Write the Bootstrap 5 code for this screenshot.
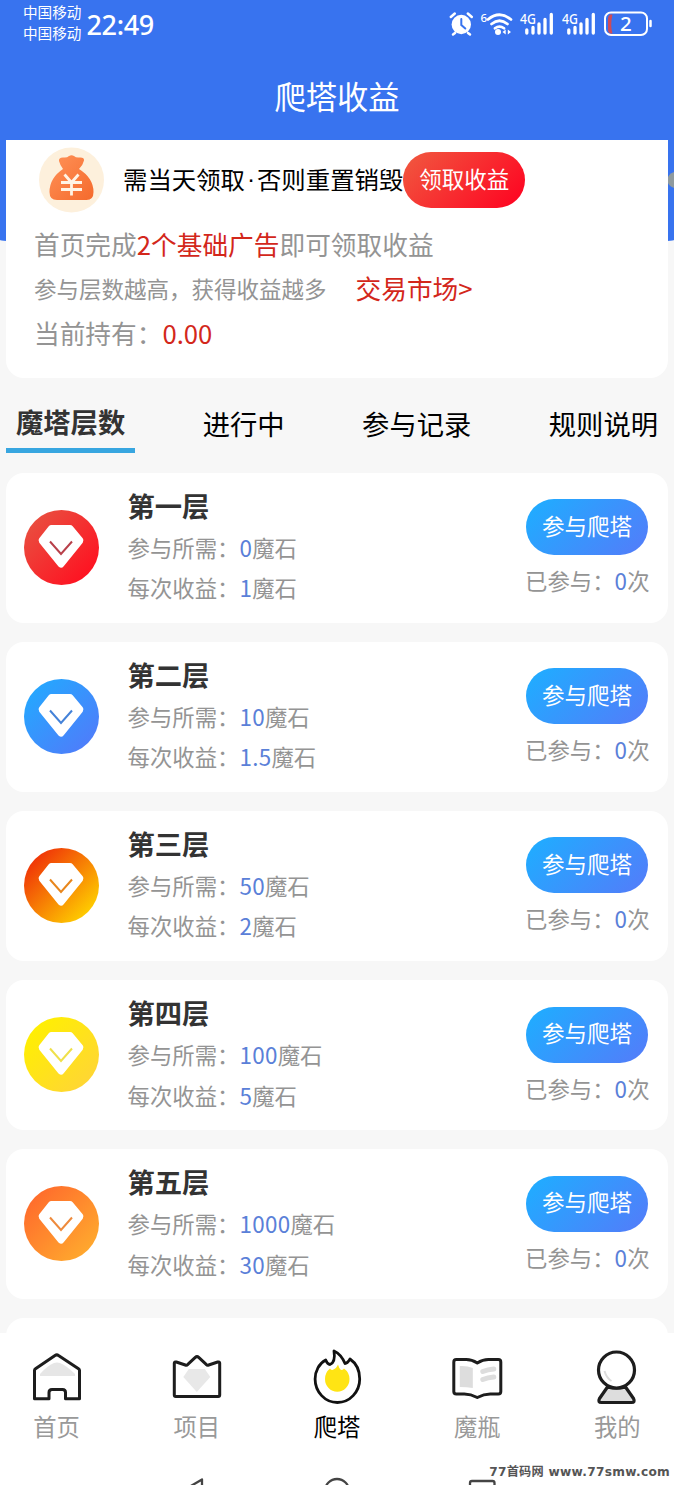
<!DOCTYPE html>
<html lang="zh-CN">
<head>
<meta charset="utf-8">
<meta name="viewport" content="width=device-width, initial-scale=1">
<title>爬塔收益</title>
<link rel="stylesheet" href="https://cdn.jsdelivr.net/npm/bootstrap@5.3.0/dist/css/bootstrap.min.css">
<style>
body{font-family:"Noto Sans CJK SC",sans-serif;background:#f7f7f7;color:#000;font-size:22.4px}
.phone{height:1485px;width:674px}
.scroller{height:1333px}
.hero::before{content:"";position:absolute;left:0;right:0;top:0;height:245px;background:#3873ef;border-radius:0 0 50% 50%/0 0 5px 5px}
.status{height:48px;padding-left:23px;padding-right:20px}
.carrier{font-size:14.6px;line-height:21px;padding-top:1px}
.clock{font:500 27px/49px "Noto Sans",sans-serif;margin-left:5px;letter-spacing:-.3px}
.page-title{font-size:31.3px;line-height:96px;height:92px;font-weight:400}
.panel{margin:0 6px;height:238px;border:0;border-radius:0 0 18px 18px;padding:7px 28px 0}
.notice{height:66px;font-size:24.4px;margin-bottom:8.5px}
.notice-text{margin:-2px 0 0 19px}
.dot{width:12px;font-family:"Liberation Sans",sans-serif}
.pill{height:56px;width:122px;border:0;border-radius:28px;font-size:22.5px;padding:0;color:#fff;line-height:51px}
.pill.btn{display:block;padding-bottom:4px}
.pill-red{background:linear-gradient(135deg,#f05a40,#ff0020)}
.pill-blue{background:linear-gradient(135deg,#22aaff 10%,#4f80fa 90%)}
.line-a{font-size:25.7px;line-height:44.5px;color:#949494}
.line-b{font-size:22.5px;color:#949494}
.hot{color:#d3271b}
.tabs{margin:0 6px;height:76px}
.tabs a{font-size:27.3px;line-height:38px;padding:0 10px;height:49px;color:#000;text-decoration:none;margin-top:26px}
.tabs a.active{font-weight:700;color:#333;border-bottom:5px solid #38a6e0;line-height:35px}
.levels{padding:18.500px 6px 0;gap:19.2px}
.level{height:150px;border:0;border-radius:18px;flex-shrink:0}
.gem{width:75px;height:75px;margin:37px 0 0 18px}
.info{margin-left:28.500px;padding-top:10px;line-height:40.500px;color:#949494}
.info h2{font-size:27.3px;line-height:44px;font-weight:700;color:#333}
.num{color:#5a80d8;letter-spacing:.3px}
.action{margin-left:auto;width:142px;padding-top:26.500px;color:#949494}
.action p{line-height:50px;white-space:nowrap;margin-left:-1px}
.dock{height:113px;font-size:23.3px;line-height:36px;color:#999}
.dock .slot{width:140.2px;flex:none}
.dock svg{display:block;width:60px;height:60px;margin-top:15px}
.sysnav{height:40px}
.mark77{right:4px;bottom:4px;font:700 12.2px/20px "DejaVu Sans","Noto Sans CJK SC",sans-serif;letter-spacing:.27px;color:#555;white-space:pre}
</style>
</head>
<body>
<div class="phone position-relative overflow-hidden d-flex flex-column">
  <main class="scroller overflow-hidden d-flex flex-column flex-shrink-0">
    <section class="hero position-relative">
      <div class="status position-relative d-flex text-white">
        <div class="carrier"><div>中国移动</div><div>中国移动</div></div>
        <div class="clock">22:49</div>
        <svg class="ms-auto" width="206" height="48" viewBox="448 0 206 48" fill="none" stroke="#fff" stroke-linecap="round">
          <circle cx="461.300" cy="24.500" r="9.700" fill="#fff" stroke="none"/>
          <path d="M450.800 17l4-3.500M471.800 17l-4-3.500M455 33l-2 1.500M468 33l2 1.500" stroke-width="2.500"/>
          <path d="M461.300 19v6l4 3.500" stroke="#3873ef" stroke-width="2"/>
          <path d="M488 19.500q11.500-9.500 23 0M491.500 24q8-6.500 16 0M495 28.300q4.500-3.500 9 0" stroke-width="2.700"/>
          <circle cx="498" cy="32" r="3" fill="#fff" stroke="none"/>
          <path d="M502.500 32l3.200-2.500v5zM511 32l-3.200-2.500v5z" fill="#fff" stroke="none"/>
          <path d="M526.800 30v3M533 27.500v5.500M539 24v9M545 19.500v13.500M551.300 14.500V33M568.800 30v3M575 27.500v5.500M581 24v9M587 19.500v13.500M593.300 14.500V33" stroke-width="3.300"/>
          <path d="M612.500 14.500H610q-2 1.500-2 4v11q0 3 2 4h2.500q-2.500-8.500 0-19z" fill="#ce4b58" stroke="none"/>
          <rect x="605" y="12.500" width="42" height="22.500" rx="6" stroke-width="2"/>
          <path d="M650.500 21v5" stroke-width="2.500"/>
          <g fill="#fff" stroke="none" font-family="Noto Sans, sans-serif" font-weight="500">
            <text x="480.500" y="22" font-size="11.500">6</text>
            <text x="520" y="23.500" font-size="14.500" textLength="16" lengthAdjust="spacingAndGlyphs">4G</text>
            <text x="562" y="23.500" font-size="14.500" textLength="16" lengthAdjust="spacingAndGlyphs">4G</text>
            <text x="620" y="31.300" font-size="20.500">2</text>
          </g>
        </svg>
      </div>
      <h1 class="page-title position-relative text-center text-white mb-0">爬塔收益</h1>
      <svg class="position-absolute end-0" style="top:171px" width="7" height="20"><path d="M7 1Q1 3 0 9q1 6 7 8z" fill="#8f9a9e"/></svg>
      <div class="panel card">
        <div class="notice d-flex align-items-center">
          <svg class="flex-shrink-0" width="66" height="66" viewBox="38 147 66 66" style="margin-left:4px">
            <defs><linearGradient id="bag" x2="1" y2="1"><stop stop-color="#ff9258"/><stop offset="1" stop-color="#f56a2c"/></linearGradient></defs>
            <circle cx="71.500" cy="180" r="32.500" fill="#fdf0dc"/>
            <path d="M63 169q-3-4-4-8-.5-4 5-3.500 3 .3 5-1.500 2.500-1.500 5 0 2 1.800 5 1.500 5.500-.5 5 3-1 4.500-5 8.500 14.500 9 14.500 23 0 8-7 8H57q-7.500 0-7.500-8 0-14 13.500-23z" fill="url(#bag)"/>
            <path d="M64.500 174.500l7 8 7-8M61 182.500h21M61 189.500h21M71.500 182v13.500" fill="none" stroke="#fff3e4" stroke-width="2.800"/>
          </svg>
          <div class="notice-text d-flex text-nowrap"><span>需当天领取</span><span class="dot text-center">·</span><span>否则重置销毁</span></div>
          <button class="pill pill-red btn flex-shrink-0">领取收益</button>
        </div>
        <div class="line-a">首页完成<span class="hot">2个基础广告</span>即可领取收益</div>
        <div class="line-a d-flex"><span class="line-b">参与层数越高，获得收益越多</span><span class="hot" style="margin-left:29px">交易市场&gt;</span></div>
        <div class="line-a">当前持有：<span class="hot">0.00</span></div>
      </div>
    </section>
    <nav class="tabs d-flex justify-content-between flex-shrink-0">
      <a class="active" href="#">魔塔层数</a><a href="#">进行中</a><a href="#">参与记录</a><a href="#">规则说明</a>
    </nav>
    <section class="levels d-flex flex-column" id="levels"></section>
  </main>
  <footer class="bg-white flex-grow-1 position-relative">
    <div class="dock d-flex justify-content-center text-center">
      <div class="slot d-flex flex-column align-items-center">
        <svg viewBox="27 1348 60 60" fill="none" stroke="#1d1d1d" stroke-width="3" stroke-linejoin="round"><path d="M40 1374q7-8 14-11 3-1 6 0 7 3 15 11v2H40z" fill="#e6e6e6" stroke="none"/><path d="M34.500 1370.500q0-1 1-1.700L55 1355.500q1.800-1.200 3.500 0l20 13.300q1 .7 1 1.700v28.300H65.500v-6.300q0-3-3-3H52q-3 0-3 3v6.300H34.500z"/></svg>首页</div>
      <div class="slot d-flex flex-column align-items-center">
        <svg viewBox="167.200 1348 60 60" fill="none" stroke="#1d1d1d" stroke-width="3" stroke-linejoin="round"><path d="M189 1369h16l5.500 8-13.500 15-13.500-15z" fill="#e8e8e8" stroke="none"/><path d="M174.500 1363q0-1.500 2-1l9 3q1.500.5 2.500-.6l7.500-7q1.700-1.500 3.400 0l7.500 7q1 1.100 2.500.6l9-3q2-.5 2 1v32q0 1.500-1.500 1.500H176q-1.500 0-1.500-1.500z"/></svg>项目</div>
      <div class="slot d-flex flex-column align-items-center text-black">
        <svg viewBox="307 1348 60 60" fill="none" stroke="#111" stroke-width="2.800" stroke-linejoin="round"><path d="M334 1351c5.500 2.500 8.500 6.500 11 12.500 2 0 3.500-2 5-4.500 6.500 4.500 9.700 11.500 9.700 20a22.300 23.500 0 0 1-44.600 0c0-8 4-15.500 10.600-19 1 2.500 2.500 4.500 4.300 4.500 4-1.500 5-7 4-13.500z"/><path d="M338 1364.500q1 4 3 5.500 2 0 3-1.500 5.500 4 5.500 10.500a12 12.500 0 0 1-24.500 0q0-6.500 5-10.500 1 1.500 2.500 1.500 4-1.500 5.500-5.500z" fill="#ffe414" stroke="none"/></svg>爬塔</div>
      <div class="slot d-flex flex-column align-items-center">
        <svg viewBox="447.200 1348 60 60" fill="none" stroke="#1d1d1d" stroke-width="3" stroke-linejoin="round"><path d="M460 1366q7-.5 13 2v20q-6-1-13-1z" fill="#ddd" stroke="none"/><path d="M483 1371.500q5-2 11-2.500M483 1379.500q5-2 11-2.500" stroke="#ddd" stroke-width="5" stroke-linecap="round"/><path d="M454 1362q0-2.500 2.500-2.500h10q5.500 0 11 3.500 5.500-3.500 11-3.500h10q2.500 0 2.500 2.500v29.500q0 2.500-2.500 2.500h-8q-6.500 0-13 3.500-6.500-3.500-13-3.500h-8q-2.500 0-2.500-2.500z"/></svg>魔瓶</div>
      <div class="slot d-flex flex-column align-items-center">
        <svg viewBox="587.500 1348 60 60" fill="none" stroke="#1d1d1d" stroke-width="3.200" stroke-linejoin="round"><path d="M608 1387l-8 11.500q-2 4 2 4h30q4 0 2-4l-8-11.500q-9 2.500-18 0z" fill="#ddd"/><circle cx="617" cy="1370" r="18" fill="#fff"/><path d="M605 1371q2 7 7 10" stroke="#ddd" stroke-width="2"/></svg>我的</div>
    </div>
    <svg class="sysnav d-block" width="674" viewBox="0 1446 674 40" fill="none" stroke="#444" stroke-width="2.300" stroke-linejoin="round"><path d="M202 1492v-12.500L184 1490"/><circle cx="337" cy="1491" r="12"/><rect x="470" y="1481" width="24.500" height="24" rx="2"/></svg>
    <div class="mark77 position-absolute">77首码网 www.77smw.com</div>
  </footer>
</div>
<script>
const levels = [
  ['第一层', '0', '1', '#e94f40', '#ff1020', '#b8404a'],
  ['第二层', '10', '1.5', '#24a8ff', '#4f7cfa', '#4482d8'],
  ['第三层', '50', '2', '#ef2d08', '#ffd400', '#e8861c'],
  ['第四层', '100', '5', '#fff000', '#ffd536', '#efe04a'],
  ['第五层', '1000', '30', '#ff6a2c', '#ffab2e', '#ee8a3c'],
  ['']
];
document.getElementById('levels').innerHTML = levels.map(([name, need, gain, from, to, tick], i) => name ? `
  <article class="level card d-flex flex-row">
    <svg class="gem flex-shrink-0" viewBox="0 0 75 75">
      <defs><linearGradient id="g${i}" x1=".1" y1=".1" x2=".9" y2=".9"><stop stop-color="${from}"/><stop offset="1" stop-color="${to}"/></linearGradient></defs>
      <circle cx="37.500" cy="37.500" r="37.500" fill="url(#g${i})"/>
      <path d="M27.500 18.500h18.500l10 12-19 23.500-19-23.500z" fill="#fff" stroke="#fff" stroke-width="7" stroke-linejoin="round"/>
      <path d="M26 31.500l11 12.500 11-12.500" fill="none" stroke="${tick}" stroke-width="2"/>
    </svg>
    <div class="info">
      <h2 class="mb-0">${name}</h2>
      <div>参与所需：<span class="num">${need}</span>魔石</div>
      <div>每次收益：<span class="num">${gain}</span>魔石</div>
    </div>
    <div class="action">
      <button class="pill pill-blue btn">参与爬塔</button>
      <p class="mb-0">已参与：<span class="num">0</span>次</p>
    </div>
  </article>` : '<article class="level card"></article>').join('');
</script>
<script src="https://cdn.jsdelivr.net/npm/bootstrap@5.3.0/dist/js/bootstrap.bundle.min.js"></script>
</body>
</html>
